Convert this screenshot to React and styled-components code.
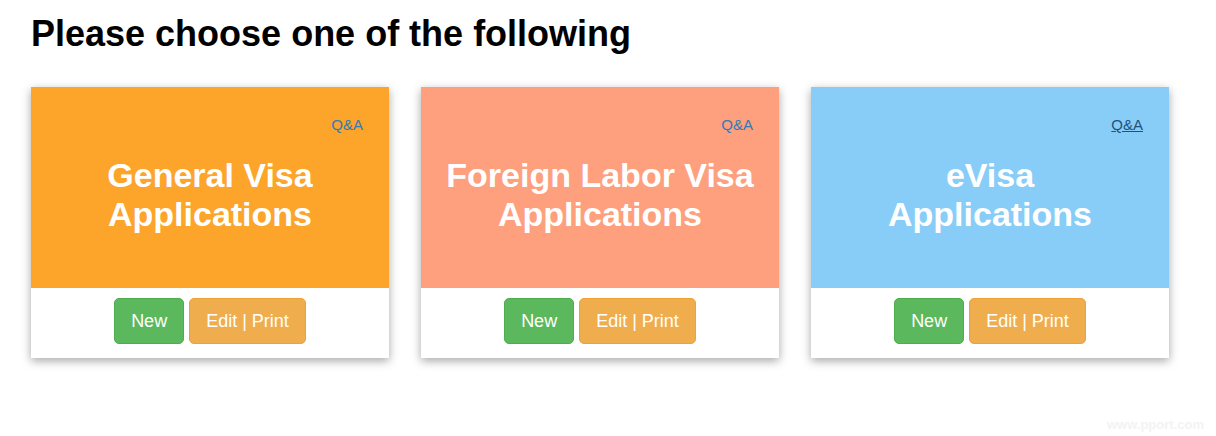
import React from 'react';
import styled, { createGlobalStyle } from 'styled-components';

const GlobalStyle = createGlobalStyle`
  body {
    margin: 0;
    background: #fff;
    font-family: "Liberation Sans", Arial, Helvetica, sans-serif;
  }
`;

const Page = styled.div`
  position: relative;
  width: 1216px;
  height: 436px;
  padding: 14px 31px 0;
  box-sizing: border-box;
`;

const Heading = styled.h1`
  margin: 0 0 33px;
  font-size: 36px;
  line-height: 40px;
  font-weight: bold;
  color: #000;
`;

const Cards = styled.div`
  display: flex;
  gap: 32px;
`;

const Card = styled.div`
  width: 358px;
  background: #fff;
  box-shadow: 0 3px 9px rgba(0, 0, 0, 0.35);
`;

const Banner = styled.div`
  height: 201px;
  box-sizing: border-box;
  padding-top: 28px;
  background: ${(p) => p.bg};
  display: flex;
  flex-direction: column;
`;

const QaLink = styled.a`
  align-self: flex-end;
  margin-right: 26px;
  font-size: 15px;
  line-height: 20px;
  color: ${(p) => (p.hover ? '#23527c' : '#337ab7')};
  text-decoration: ${(p) => (p.hover ? 'underline' : 'none')};
`;

const Title = styled.div`
  margin-top: 21px;
  text-align: center;
  color: #fff;
  font-size: 34px;
  line-height: 39px;
  font-weight: bold;
  white-space: nowrap;
`;

const Footer = styled.div`
  height: 70px;
  display: flex;
  justify-content: center;
  align-items: flex-start;
  gap: 5px;
  padding-top: 10px;
  box-sizing: border-box;
`;

const Button = styled.button`
  height: 46px;
  padding: 0 16px;
  font-family: inherit;
  font-size: 18px;
  color: #fff;
  border-radius: 5px;
  border: 1px solid ${(p) => (p.kind === 'success' ? '#4cae4c' : '#eea236')};
  background: ${(p) => (p.kind === 'success' ? '#5cb85c' : '#f0ad4e')};
`;

const Watermark = styled.div`
  position: absolute;
  right: 12px;
  bottom: 4px;
  font-size: 13px;
  font-weight: bold;
  color: #f3f3f3;
`;

const options = [
  { bg: '#fda42a', title: ['General Visa', 'Applications'] },
  { bg: '#fea07d', title: ['Foreign Labor Visa', 'Applications'] },
  { bg: '#88cdf7', title: ['eVisa', 'Applications'], hover: true },
];

const App = () => (
  <Page>
    <GlobalStyle />
    <Heading>Please choose one of the following</Heading>
    <Cards>
      {options.map((o) => (
        <Card key={o.title[0]}>
          <Banner bg={o.bg}>
            <QaLink href="#" hover={o.hover}>Q&amp;A</QaLink>
            <Title>
              {o.title[0]}
              <br />
              {o.title[1]}
            </Title>
          </Banner>
          <Footer>
            <Button kind="success">New</Button>
            <Button kind="warning">Edit | Print</Button>
          </Footer>
        </Card>
      ))}
    </Cards>
    <Watermark>www.pport.com</Watermark>
  </Page>
);

export default App;
